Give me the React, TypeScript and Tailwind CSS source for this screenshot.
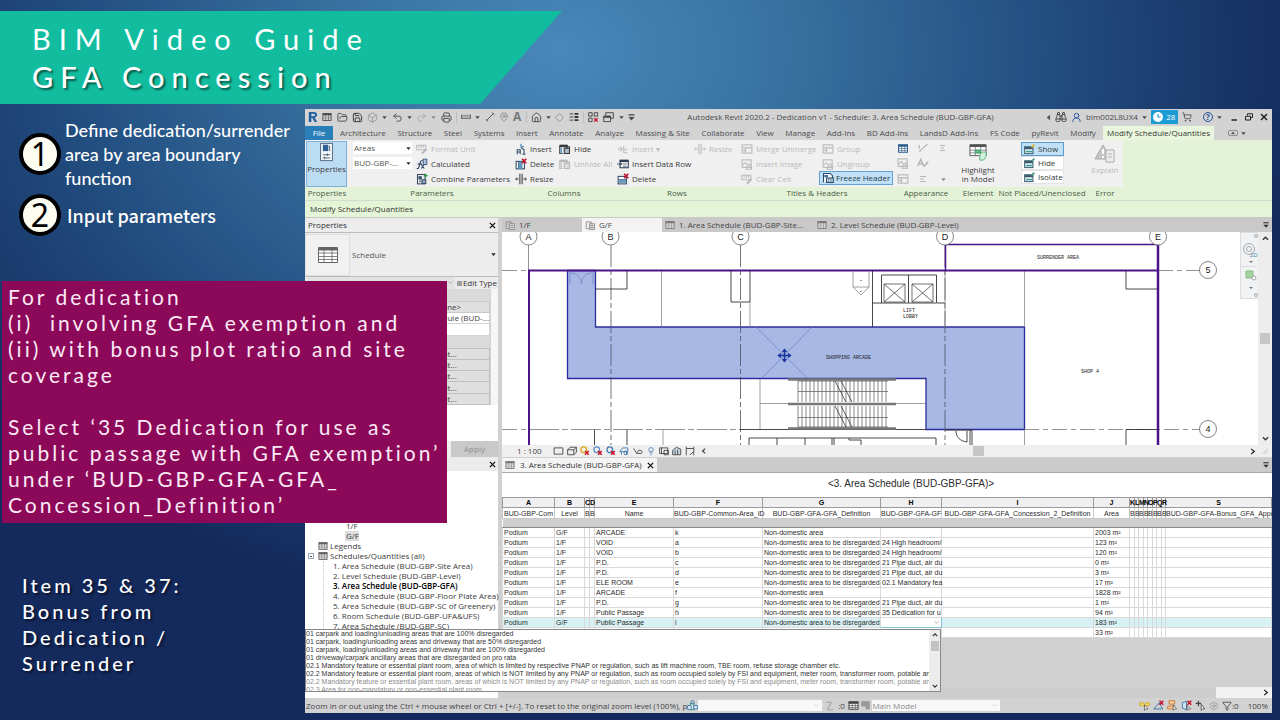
import type { ReactNode } from 'react';
import clsx from 'clsx';
import {
  Binoculars,
  Box,
  ChevronDown,
  Diamond,
  FolderOpen,
  Funnel,
  House,
  MapPin,
  Printer,
  Redo2,
  Save,
  Settings,
  ShoppingCart,
  Undo2,
  UserRound,
} from 'lucide-react';

const SANS = "font-['Open_Sans','Noto_Sans',sans-serif]";
const ROUND = "font-['Lato','Noto_Sans',sans-serif]";

const MENU_TABS = [
  'Architecture',
  'Structure',
  'Steel',
  'Systems',
  'Insert',
  'Annotate',
  'Analyze',
  'Massing & Site',
  'Collaborate',
  'View',
  'Manage',
  'Add-Ins',
  'BD Add-Ins',
  'LandsD Add-Ins',
  'FS Code',
  'pyRevit',
  'Modify',
];

const SCHEDULES = [
  '1. Area Schedule (BUD-GBP-Site Area)',
  '2. Level Schedule (BUD-GBP-Level)',
  '3. Area Schedule (BUD-GBP-GFA)',
  '4. Area Schedule (BUD-GBP-Floor Plate Area)',
  '5. Area Schedule (BUD-GBP-SC of Greenery)',
  '6. Room Schedule (BUD-GBP-UFA&UFS)',
  '7. Area Schedule (BUD-GBP-SC)',
];

const COLUMNS = [
  { letter: 'A', name: 'BUD-GBP-Com', width: 'w-[52px]' },
  { letter: 'B', name: 'Level', width: 'w-[30px]' },
  { letter: 'C', name: 'B', width: 'w-[5px]' },
  { letter: 'D', name: 'B', width: 'w-[5px]' },
  { letter: 'E', name: 'Name', width: 'w-[79px]' },
  { letter: 'F', name: 'BUD-GBP-Common-Area_ID', width: 'w-[89px]' },
  { letter: 'G', name: 'BUD-GBP-GFA-GFA_Definition', width: 'w-[118px]' },
  { letter: 'H', name: 'BUD-GBP-GFA-GF', width: 'w-[61px]' },
  { letter: 'I', name: 'BUD-GBP-GFA-GFA_Concession_2_Definition', width: 'w-[152px]' },
  { letter: 'J', name: 'Area', width: 'w-[36px]' },
  { letter: 'K', name: 'B', width: 'w-[5px]' },
  { letter: 'L', name: 'B', width: 'w-[4px]' },
  { letter: 'M', name: 'B', width: 'w-[5px]' },
  { letter: 'N', name: 'B', width: 'w-[4px]' },
  { letter: 'O', name: 'B', width: 'w-[5px]' },
  { letter: 'P', name: 'B', width: 'w-[4px]' },
  { letter: 'Q', name: 'B', width: 'w-[5px]' },
  { letter: 'R', name: 'B', width: 'w-[4px]' },
  { letter: 'S', name: 'BUD-GBP-GFA-Bonus_GFA_Appo', width: '' },
];

const DISREGARDED = 'Non-domestic area to be disregarded';

const ROWS = [
  ['Podium', 'G/F', 'ARCADE', 'k', 'Non-domestic area', '', '2003 m²'],
  ['Podium', '1/F', 'VOID', 'a', DISREGARDED, '24 High headroom/', '123 m²'],
  ['Podium', '1/F', 'VOID', 'b', DISREGARDED, '24 High headroom/', '120 m²'],
  ['Podium', '1/F', 'P.D.', 'c', DISREGARDED, '21 Pipe duct, air du', '0 m²'],
  ['Podium', '1/F', 'P.D.', 'd', DISREGARDED, '21 Pipe duct, air du', '3 m²'],
  ['Podium', '1/F', 'ELE ROOM', 'e', DISREGARDED, '02.1 Mandatory fea', '17 m²'],
  ['Podium', '1/F', 'ARCADE', 'f', 'Non-domestic area', '', '1828 m²'],
  ['Podium', '1/F', 'P.D.', 'g', DISREGARDED, '21 Pipe duct, air du', '1 m²'],
  ['Podium', '1/F', 'Public Passage', 'h', DISREGARDED, '35 Dedication for u', '94 m²'],
  ['Podium', 'G/F', 'Public Passage', 'i', DISREGARDED, '', '183 m²'],
  ['', '', '', '', '', '', '33 m²'],
];

const OPTIONS = [
  '01 carpark and loading/unloading areas that are 100% disregarded',
  '01 carpark, loading/unloading areas and driveway that are 50% disregarded',
  '01 carpark, loading/unloading areas and driveway that are 100% disregarded',
  '01 driveway/carpark ancillary areas that are disregarded on pro rata',
  '02.1 Mandatory feature or essential plant room, area of which is limited by respective PNAP or regulation, such as lift machine room, TBE room, refuse storage chamber etc.',
  '02.2 Mandatory feature or essential plant room, areas of which is NOT limited by any PNAP or regulation, such as room occupied solely by FSI and equipment, meter room, transformer room, potable and fl',
];

function Svg({ className, children }: { className?: string; children: ReactNode }) {
  return (
    <svg
      viewBox="0 0 16 16"
      fill="none"
      stroke="currentColor"
      strokeWidth="1.4"
      className={clsx('shrink-0', className || 'size-3')}
      aria-hidden="true"
    >
      {children}
    </svg>
  );
}

function Caret({ className }: { className?: string }) {
  return (
    <Svg className={clsx('size-[5px]', className)}>
      <path d="M1 4h14l-7 9z" fill="currentColor" stroke="none" />
    </Svg>
  );
}

function TableIcon({ className }: { className?: string }) {
  return (
    <Svg className={className}>
      <rect x="1.5" y="2.5" width="13" height="11" fill="#fafafa" />
      <path d="M1 4h14" strokeWidth="3" />
      <path d="M1 8h14M1 11h14M6 4v9M10.500 4v9" strokeWidth=".9" />
    </Svg>
  );
}

function PlanIcon() {
  return (
    <Svg className="size-[10px] text-[#8a8a8a]">
      <path d="M2 3h8v3M2 3v11h4" />
      <rect x="7" y="6" width="8" height="9" fill="#d8d8d8" />
      <path d="M9 9h4M9 12h4" />
    </Svg>
  );
}

function RedX() {
  return <path d="M9.500 1l5.500 6M15 1L9.500 7" stroke="#c4122f" strokeWidth="2.200" />;
}

function FormatIcon() {
  return (
    <Svg>
      <path d="M1 3h12v6H1zM4 3v3M7 3v4M10 3v3" />
      <path d="M8 14l6-6" strokeWidth="2.500" />
    </Svg>
  );
}

function CalcIcon() {
  return (
    <Svg className="size-3 text-[#1f3a5f]">
      <path d="M1 14c3 1 3-3 4-6s1-5 4-4M2 8h6M7 9l4 5M11 9l-4 5" />
      <rect x="9.500" y="1.500" width="5" height="7" fill="#a9c4dc" strokeWidth="1" />
    </Svg>
  );
}

function CombineIcon() {
  return (
    <Svg className="size-3 text-[#3b4a5c]">
      <rect x="2" y="2" width="10" height="12.500" fill="#e9eef3" />
      <path d="M4 5h3v3H4zM4 11h3" fill="#2e5f94" />
      <rect x="8" y="9" width="5" height="5" fill="#8db0cf" />
      <path d="M13 1v5M10.500 3.500h5" stroke="#2b9e4a" strokeWidth="1.800" />
    </Svg>
  );
}

function InsertIcon() {
  return (
    <Svg className="size-3 text-[#2c4965]">
      <path d="M8 1v4h4" stroke="#2f78b7" />
      <path d="M3 15V9h4v6M3 12h4M12 15V9L8 6M10 15h4" />
    </Svg>
  );
}

function InsertRowIcon() {
  return (
    <Svg>
      <path d="M1 8h6M4 5l3 3-3 3M9 13V4M9 9h5M9 13h5" />
    </Svg>
  );
}

function DeleteIcon({ rows }: { rows?: boolean }) {
  return (
    <Svg className="size-3 text-[#2b4a66]">
      <rect x="1.500" y="4.500" width="11" height="10" fill="#fff" />
      <path d={rows ? 'M2 9h10M2 12h10' : 'M5 5v9M9 5v9'} />
      <rect x={rows ? 2 : 5} y={rows ? 9 : 5} width={rows ? 10 : 4} height={rows ? 3 : 9} fill="#5f9cc5" stroke="none" />
      <RedX />
    </Svg>
  );
}

function ResizeIcon() {
  return (
    <Svg>
      <path d="M6.500 1v14M9.500 1v14" />
      <path d="M5 8H1M11 8h4M2.500 6L1 8l1.500 2M13.500 6L15 8l-1.500 2" strokeWidth="1.200" />
    </Svg>
  );
}

function HideIcon({ disabled }: { disabled?: boolean }) {
  return (
    <Svg>
      <path d="M1 3h10v4M1 3v11h4" />
      <path d="M1 4h10" strokeWidth="3" />
      <path d="M3 6v8" stroke={disabled ? '#c9c9c9' : '#5f9cc5'} strokeWidth="2" />
      <rect x="7" y="7" width="7" height="7" fill={disabled ? '#ddd' : '#a9bccb'} />
      <path d="M9 7V5h5v9" />
    </Svg>
  );
}

function GridIcon() {
  return (
    <Svg>
      <rect x="1.500" y="2.500" width="13" height="11" />
      <path d="M2 6.500h12M6 6.500V13M2 10h4" />
    </Svg>
  );
}

function PictureIcon() {
  return (
    <Svg>
      <rect x="1.500" y="2.500" width="12" height="10" />
      <path d="M2 10l4-4 3 4 2-2 3 3M7 12h7v3H7z" />
    </Svg>
  );
}

function FreezeIcon() {
  return (
    <Svg className="size-3 text-[#2a4a68]">
      <path d="M2 14V2h9l3 3v3" fill="#f7fbff" />
      <path d="M3 4h5v3H3z" fill="#3d6e9b" stroke="none" />
      <rect x="6" y="8" width="9" height="6" fill="#cfe0ee" />
      <path d="M9 8v6M12 8v6" strokeWidth=".8" />
    </Svg>
  );
}

function RowsIcon() {
  return (
    <Svg className="size-3 text-[#2a3d52]">
      <rect x="4" y="3" width="11" height="10" fill="#fff" />
      <path d="M4 4h11" strokeWidth="3" />
      <path d="M0 8h6M4 6l3 2-3 2M8 8h5M8 11h5" strokeWidth="1" />
    </Svg>
  );
}

function Cmd({ icon, label, disabled }: { icon: ReactNode; label: string; disabled?: boolean }) {
  return (
    <button
      type="button"
      disabled={disabled}
      className={clsx(
        'flex h-[15px] items-center gap-[3px] whitespace-nowrap',
        disabled ? 'text-[#b9b9b9]' : 'text-[#3a3a3a]',
      )}
    >
      {icon}
      {label}
    </button>
  );
}

function Group({ label, className, children }: { label: string; className: string; children: ReactNode }) {
  return (
    <section className={clsx('flex shrink-0 flex-col', className)}>
      <div className="flex h-[47px] bg-[#f0f0f1] pt-px">{children}</div>
      <h3 className="h-[13px] text-center leading-3 whitespace-nowrap text-[#4b5d45]">{label}</h3>
    </section>
  );
}

function Dropdown({ label, value, className }: { label: string; value: string; className?: string }) {
  return (
    <div className={clsx('relative bg-white', className)}>
      <select aria-label={label} className="block h-full w-full appearance-none pr-2 pl-px text-[#555]">
        <option>{value}</option>
      </select>
      <Caret className="pointer-events-none absolute top-1 right-px text-[#333]" />
    </div>
  );
}

function TitleBar() {
  return (
    <div className="flex h-4 items-center bg-[#d3d3d4] text-[#4a4a4a]">
      <div className="flex w-[330px] shrink-0 items-center justify-between pl-[3px]">
        <svg viewBox="0 0 12 14" className="h-3 w-[10px]" aria-hidden="true">
          <path d="M1 1h6c5 0 5 6 1 7l3 5H8L5 8H4v5H1zM4 3v3h3c2 0 2-3 0-3z" fill="#1d5f9e" fillRule="evenodd" />
        </svg>
        <TableIcon className="size-[10px]" />
        <FolderOpen size={11} />
        <Save size={11} className="text-[#333]" />
        <Box size={11} className="text-[#999]" />
        <Caret />
        <Undo2 size={11} />
        <Caret />
        <Redo2 size={11} className="text-[#aaa]" />
        <Caret className="text-[#888]" />
        <Printer size={11} />
        <span className="h-3 w-px bg-[#bdbdbd]" />
        <Svg className="size-[10px]">
          <path d="M1 4v7M15 4v7M1 10h14" />
          <path d="M1 6h14" strokeWidth="3" stroke="#999" />
        </Svg>
        <Caret />
        <Svg className="size-[10px]">
          <path d="M3 13L13 3M1 12l4 3M11 1l4 3" />
        </Svg>
        <MapPin size={10} className="text-[#888]" />
        <b className="text-xs leading-3 text-[#777]">A</b>
        <span className="h-3 w-px bg-[#bdbdbd]" />
        <House size={11} />
        <Caret />
        <Diamond size={9} className="text-[#888]" />
        <Svg className="size-[10px] text-[#333]">
          <path d="M1 3h6M1 8h6M1 13h6" />
          <path d="M9 3h6M9 8h6M9 13h6" strokeWidth="3" />
        </Svg>
        <span className="h-3 w-px bg-[#bdbdbd]" />
        <Svg className="size-[11px]">
          <path d="M1 1h5v5H1zM9 1h5v5H9zM1 9h5v5H1z" />
          <path d="M9 9l5 5M14 9l-5 5" stroke="#c4122f" strokeWidth="2" />
        </Svg>
        <Svg className="size-[11px]">
          <path d="M4 5V1h11v8h-4M1 6h10v8H1z" />
          <path d="M1 7h10" strokeWidth="3" />
        </Svg>
        <Caret />
        <Svg className="size-[7px]">
          <path d="M1 2h14" strokeWidth="3" />
          <path d="M1 7h14l-7 8z" fill="currentColor" stroke="none" />
        </Svg>
      </div>
      <h2 className="min-w-0 flex-1 truncate text-center leading-3">
        Autodesk Revit 2020.2 - Dedication v1 - Schedule: 3. Area Schedule (BUD-GBP-GFA)
      </h2>
      <div className="flex w-[226px] shrink-0 items-center gap-1 pr-1">
        <Svg className="size-[5px]">
          <path d="M12 1v14L3 8z" fill="currentColor" />
        </Svg>
        <Binoculars size={12} />
        <UserRound size={11} className="text-[#27509b]" />
        bim002L8UX4
        <Caret />
        <span className="flex h-[14px] w-[27px] items-center justify-center gap-[3px] bg-[#1c9bd4] text-white">
          <Svg className="size-[10px]">
            <circle cx="8" cy="8" r="8" fill="#fff" stroke="none" />
            <path d="M8 3v5h4" stroke="#1c9bd4" strokeWidth="1.800" />
          </Svg>
          28
        </span>
        <ShoppingCart size={10} />
        <span className="ml-[7px] flex size-[10px] items-center justify-center rounded-full border border-[#27509b] font-bold text-[#27509b]">
          ?
        </span>
        <Caret />
        <span className="flex flex-1 items-center justify-end gap-[7px] text-[#222]">
          <button type="button" aria-label="Minimize">
            <Svg className="size-2">
              <path d="M3 14h11" strokeWidth="3" />
            </Svg>
          </button>
          <button type="button" aria-label="Restore">
            <Svg className="size-2">
              <path d="M5 5V1.500h10V9h-4M1 6.500h10V14H1z" strokeWidth="2" />
            </Svg>
          </button>
          <button type="button" aria-label="Close">
            <Svg className="size-2">
              <path d="M2 2l12 12M14 2L2 14" strokeWidth="3" />
            </Svg>
          </button>
        </span>
      </div>
    </div>
  );
}

function MenuTabs() {
  return (
    <nav className="flex h-[15px] items-stretch bg-[#d3d3d4] pt-px leading-[14px] text-[#4d4d4d]">
      <button type="button" className="w-7 bg-[#2a7fb8] text-white">
        File
      </button>
      <div className="flex max-w-[770px] flex-1 justify-between px-[7px] whitespace-nowrap">
        {MENU_TABS.map((tab) => (
          <button type="button" key={tab}>
            {tab}
          </button>
        ))}
      </div>
      <button type="button" className="w-[111px] bg-[#e9f6dd] whitespace-nowrap text-[#333]">
        Modify Schedule/Quantities
      </button>
      <span className="flex items-center gap-[3px] pl-[14px]">
        <Svg className="h-[6px] w-[10px]">
          <rect x="-4" y="1" width="24" height="14" rx="4" />
          <path d="M4 10h8L8 5z" fill="currentColor" />
        </Svg>
        <Caret />
      </span>
    </nav>
  );
}

function Ribbon() {
  return (
    <div className="flex h-[61px] border-b border-[#d5dccf] bg-[#e4f3d8]">
      <Group label="Properties" className="w-[44px]">
        <button
          type="button"
          className="ml-px flex h-[46px] w-[41px] flex-col items-center border border-[#7fb2d8] bg-[#bcdcf4] text-[#3a3a3a]"
        >
          <svg viewBox="0 0 16 22" className="h-5 w-[15px]" fill="none" stroke="#4b6177" aria-hidden="true">
            <rect x="1.500" y="1.500" width="13" height="19" fill="#f5f7fa" />
            <path d="M4 3h6v7H4z" fill="#2f5e93" stroke="none" />
            <path d="M11.500 4v6M4 14h8M4 17.500h8M9 12.500v3M6 16v3" />
          </svg>
          <span className="pt-[2px]">Properties</span>
        </button>
      </Group>
      <Group label="Parameters" className="w-[166px]">
        <div className="flex w-[63px] flex-col gap-[3px] pt-px pl-1">
          <Dropdown label="Parameter type" value="Areas" className="h-3" />
          <Dropdown label="Parameter name" value="BUD-GBP-..." className="h-3" />
        </div>
        <div className="flex flex-col pl-1">
          <Cmd icon={<FormatIcon />} label="Format Unit" disabled />
          <Cmd icon={<CalcIcon />} label="Calculated" />
          <Cmd icon={<CombineIcon />} label="Combine Parameters" />
        </div>
      </Group>
      <Group label="Columns" className="w-[98px]">
        <div className="flex w-11 flex-col">
          <Cmd icon={<InsertIcon />} label="Insert" />
          <Cmd icon={<DeleteIcon />} label="Delete" />
          <Cmd icon={<ResizeIcon />} label="Resize" />
        </div>
        <div className="flex flex-col">
          <Cmd icon={<HideIcon />} label="Hide" />
          <Cmd icon={<HideIcon disabled />} label="Unhide All" disabled />
        </div>
      </Group>
      <Group label="Rows" className="w-[128px]">
        <div className="flex w-[81px] flex-col pl-1">
          <Cmd icon={<InsertRowIcon />} label="Insert ▾" disabled />
          <Cmd icon={<RowsIcon />} label="Insert Data Row" />
          <Cmd icon={<DeleteIcon rows />} label="Delete" />
        </div>
        <Cmd icon={<ResizeIcon />} label="Resize" disabled />
      </Group>
      <Group label="Titles & Headers" className="w-[152px]">
        <div className="flex w-[78px] flex-col">
          <Cmd icon={<GridIcon />} label="Merge Unmerge" disabled />
          <Cmd icon={<PictureIcon />} label="Insert Image" disabled />
          <Cmd icon={<FormatIcon />} label="Clear Cell" disabled />
        </div>
        <div className="flex flex-col">
          <div className="flex flex-col pl-[3px]">
            <Cmd icon={<GridIcon />} label="Group" disabled />
            <Cmd icon={<PictureIcon />} label="Ungroup" disabled />
          </div>
          <button
            type="button"
            className="flex h-[14px] w-[74px] items-center gap-[2px] border border-[#5fa3d3] bg-[#bfe0f6] pl-[2px] whitespace-nowrap text-[#2e3c48]"
          >
            <FreezeIcon />
            Freeze Header
          </button>
        </div>
      </Group>
      <Group label="Appearance" className="w-[66px]">
        <div className="grid grid-cols-3 items-center justify-items-center text-[#b5b5b5]">
          <TableIcon className="h-[11px] w-5 text-[#2f5e8a]" />
          <Svg className="h-[10px] w-4">
            <path d="M2 14l5-5L15 2M2 3v6" strokeWidth="2" />
          </Svg>
          <Svg className="h-2 w-4">
            <path d="M2 3h10M4 8h6M2 13h10" strokeWidth="2" />
          </Svg>
          <PictureIcon />
          <Svg className="h-3 w-4">
            <path d="M1 12L5 3l4 9M3 9h4M9 13l6-7" strokeWidth="2" />
          </Svg>
          <span />
          <GridIcon />
          <Svg className="h-2 w-4">
            <path d="M2 3h12M2 8h8M2 13h12" strokeWidth="2" />
          </Svg>
          <Caret className="text-[#888]" />
        </div>
      </Group>
      <Group label="Element" className="w-[38px]">
        <button type="button" className="flex w-full flex-col items-center leading-[9px] text-[#3a3a3a]">
          <svg viewBox="0 0 20 20" className="mt-[2px] mb-1 h-[18px] w-5" fill="none" stroke="#555" aria-hidden="true">
            <path d="M1 2h18v12H1z" fill="#fff" />
            <path d="M1 3h18" strokeWidth="3" />
            <path d="M1 8h18M1 11h18M7 3v11M13 3v11" strokeWidth=".7" />
            <path d="M7 8h6v3H7z" fill="#65c08a" stroke="#2fa060" />
            <path d="M12 13l3-3h4v5l-3 4h-4z" fill="#d6f0de" stroke="#4fae78" />
          </svg>
          Highlight
          <br />
          in Model
        </button>
      </Group>
      <Group label="Not Placed/Unenclosed" className="w-[90px]">
        <div className="flex flex-col pt-px pl-[24px]">
          {['Show', 'Hide', 'Isolate'].map((item) => (
            <button
              type="button"
              key={item}
              className={clsx(
                'flex h-[14px] w-[43px] items-center gap-[3px] border px-[2px] text-[#3a3a3a]',
                item === 'Show' ? 'border-[#5b9bcd] bg-[#bfe0f6]' : 'border-[#e4e4e4] bg-white',
              )}
            >
              <Svg className="size-[11px] text-[#35566b]">
                <rect x="1" y="4" width="12" height="10" fill="#dcebef" />
                <path d="M1 6h12" strokeWidth="3" />
                <path d="M3 11h9" stroke="#3f9a9a" strokeWidth="2" />
                <path d="M11 5l4-4" stroke={item === 'Show' ? '#e0b520' : '#4f9a7a'} strokeWidth="2.500" />
              </Svg>
              {item}
            </button>
          ))}
        </div>
      </Group>
      <Group label="Error" className="w-[36px]">
        <button type="button" disabled className="flex w-full flex-col items-center text-[#b9b9b9]">
          <svg viewBox="0 0 22 20" className="mt-[2px] mb-[2px] h-5 w-[22px]" fill="none" stroke="#aaa" aria-hidden="true">
            <path d="M9 2l8 14H1z" fill="#c6c6c6" />
            <path d="M9 6v5M9 13v2" stroke="#fff" strokeWidth="2" />
            <path d="M12 7h8v12h-8z" fill="#eee" />
            <path d="M14 11h4M14 14h4" />
          </svg>
          Explain
        </button>
      </Group>
    </div>
  );
}

function PanelHeader({ title }: { title: string }) {
  return (
    <div className="flex h-[14px] items-center justify-between bg-[#ececed] pr-[2px] pl-[3px] text-[#333]">
      {title}
      <button type="button" aria-label="Close panel" className="ml-auto">
        <Svg className="size-[7px] text-[#111]">
          <path d="M2 2l12 12M14 2L2 14" strokeWidth="3" />
        </Svg>
      </button>
    </div>
  );
}

function PropertiesPanel() {
  return (
    <div className="flex h-[239px] flex-col">
      <PanelHeader title="Properties" />
      <div className="flex h-[45px] items-center border-y border-[#bcbcbc] bg-[#ededee] pr-[2px] text-[#555]">
        <div className="flex h-[42px] w-[45px] items-center justify-center border border-[#dedede] bg-[#f1f1f2]">
          <svg viewBox="0 0 20 16" className="h-4 w-5" fill="#fff" stroke="#666" aria-hidden="true">
            <path d="M.5.5h19v15H.5z" />
            <path d="M1 2h18" strokeWidth="3" />
            <path d="M1 6h18M1 9.500h18M1 12.500h18M6 3v12M14 3v12" strokeWidth=".8" />
          </svg>
        </div>
        <span className="flex-1 pl-[2px] leading-3">Schedule</span>
        <Caret className="text-[#222]" />
      </div>
      <div className="flex h-[12px] items-center justify-between bg-[#ececec] pl-[2px] text-[#333]">
        <div className="relative w-[148px] bg-[#e2e2e2]">
          <select aria-label="Schedule instance" className="block h-3 w-full appearance-none pr-3">
            <option>Schedule: 3. Area Schedule (BUD-GBP...</option>
          </select>
          <ChevronDown size={7} className="pointer-events-none absolute top-[2px] right-px text-[#888]" />
        </div>
        <button type="button" className="flex items-center gap-px pr-px whitespace-nowrap">
          <Svg className="size-[5px]">
            <path d="M1 1h6v6H1zM9 1h6v6H9zM1 9h6v6H1zM9 9h6v6H9z" />
          </Svg>
          Edit Type
        </button>
      </div>
      <div className="flex flex-1 bg-white text-[#444]">
        <table className="h-[116px] flex-1 border-collapse text-center leading-[10px]">
          <tbody>
            <tr className="h-3 bg-[#dadadb]">
              <td colSpan={2} />
            </tr>
            <tr className="h-[11px]">
              <td />
              <td className="w-[86px] border border-[#c8c8c8] bg-[#dfdfdf]">{'<None>'}</td>
            </tr>
            <tr className="h-[11px]">
              <td />
              <td className="border border-[#d4d4d4] text-right whitespace-nowrap">Area Schedule (BUD-...</td>
            </tr>
            <tr className="h-3">
              <td />
              <td className="border border-[#d4d4d4]" />
            </tr>
            <tr className="h-3 bg-[#dadadb]">
              <td colSpan={2} />
            </tr>
            {[1, 2, 3, 4, 5].map((row) => (
              <tr key={row} className="h-[11px]">
                <td />
                <td className="border border-[#bfbfbf] bg-[#dfdfdf]">Edit...</td>
              </tr>
            ))}
          </tbody>
        </table>
        <div className="h-[116px] w-2 border-l border-[#d4d4d4] bg-[#f6f6f6]" />
      </div>
      <div className="flex h-[16px] justify-end bg-[#f0f0f0]">
        <button type="button" disabled className="w-[47px] bg-[#c9c9c9] text-[#8f8f8f]">
          Apply
        </button>
      </div>
    </div>
  );
}

function ProjectBrowser() {
  return (
    <div className="flex flex-1 flex-col bg-white">
      <PanelHeader title="" />
      <ul className="pt-[50px] leading-[10px] text-[#3a3a3a]">
        <li className="ml-[41px]">1/F</li>
        <li className="ml-[40px] w-[14px] bg-[#dcdcdc] pl-px">G/F</li>
        <li className="flex items-center gap-[2px] pl-[13px]">
          <TableIcon className="size-[10px] text-[#666]" />
          Legends
        </li>
        <li>
          <div className="flex items-center gap-[2px] pl-[3px]">
            <span className="mr-[2px] flex size-[6px] items-center justify-center border border-[#9aa6b5]">
              <span className="h-px w-[2px] bg-[#555]" />
            </span>
            <TableIcon className="size-[10px] text-[#666]" />
            Schedules/Quantities (all)
          </div>
          <ul className="ml-[18px] border-l border-dotted border-[#c5c5c5] pl-[9px] whitespace-nowrap">
            {SCHEDULES.map((name, i) => (
              <li key={name} className={i === 2 ? 'font-semibold text-black' : undefined}>
                {name}
              </li>
            ))}
          </ul>
        </li>
      </ul>
    </div>
  );
}

function Bubble({ x, y, label }: { x: number; y: number; label: string }) {
  return (
    <g>
      <circle cx={x} cy={y} r="8.500" fill="#fff" stroke="#666" strokeWidth=".8" />
      <text x={x} y={y + 3} fontSize="9" textAnchor="middle" fill="#222">
        {label}
      </text>
    </g>
  );
}

function FloorPlan() {
  const treads = Array.from({ length: 23 }, (_, i) => 798 + i * 4);

  return (
    <svg
      viewBox="502 232 756 213"
      preserveAspectRatio="xMinYMin slice"
      className="block h-[213px] min-w-0 flex-1 bg-white font-['Liberation_Sans',sans-serif]"
      fill="none"
      role="img"
      aria-label="G/F plan"
    >
      <path
        d="M567.500 270.500H595.500V327H1024.500V429.500H926V378.500H567.500z"
        fill="#a7b8e5"
        stroke="#2c2c9c"
        strokeWidth="1.300"
      />
      <g stroke="#7080c0" strokeWidth=".7">
        <path d="M756 327l51 51M812 327l-50 51" />
        <path d="M570 272v12M593 272v12M571 273c6 0 10 4 10.500 11M592 273c-6 0-10 4-10.500 11" />
      </g>
      <g stroke="#777" strokeWidth=".8">
        <path d="M528.500 245v25" />
        <path d="M611 245v200M740.500 245v200M945 245v200" strokeDasharray="22 3 5 3" stroke="#4d5160" />
        <path d="M502 270.500h26M502 429.500h27M1158 270.500h42M1024 429.500h176" strokeDasharray="15 4 5 4" />
        <path d="M529 429.500h211" strokeDasharray="30 3 6 3" />
      </g>
      <g stroke="#333" strokeWidth=".9">
        <path d="M595.500 289h31.500V271M731 271v31h19v-31M872.500 271v32h9v-28h55v28h8.500M881 303h55M908.500 275v28M872.500 303v24" />
        <path d="M884 284h21v18h-21zM912 284h21v18h-21zM884 284l21 18M905 284l-21 18M912 284l21 18M933 284l-21 18" strokeWidth=".7" />
        <path d="M1126 271v18h31M1126 445v-15.500h31M594.500 445v-15.500M627 445v-15.500M740 429.500h186" />
        <path d="M749 445v-7h187v7M777 438v7M805 438v7M832 438v7M834 438v7M849 438v2h12v5" />
        <path d="M945 430h27v15M967 431v11c-7-1-11-5-11-11M970 430v15" />
      </g>
      <g stroke="#888" strokeWidth=".8">
        <path d="M661.500 271v56M750 302v25M1024.500 271v56M1024.500 430v15M663 430v15M760 379v50M945 271v56" />
        <path d="M853 272v15h16v-15M853 287l8 8 8-8" />
        <path d="M760 403.500h28M896 403.500h30" />
      </g>
      <path d="M788 379.500h108M788 404h108M788 428.500h108" stroke="#777" strokeWidth="2.500" />
      <g stroke="#555" strokeWidth=".7">
        {treads.map((x) => (
          <path key={x} d={`M${x} 381v21M${x} 406v21`} />
        ))}
        <path d="M798 391.500h90M798 417.500h90M798 381h90M798 427h90" />
        <path d="M835 381l11 21M841 381l11 21M835 406l11 21M841 406l11 21" stroke="#222" />
      </g>
      <path d="M861 280v1M861 291v1" stroke="#333" />
      <g stroke="#4a1488">
        <path d="M529 445V270.500H1158" strokeWidth="2" />
        <path d="M1158 244v201" strokeWidth="2.500" />
        <path d="M945.500 270V244.500H1158" strokeWidth="1.500" />
      </g>
      <Bubble x={528.5} y={236.5} label="A" />
      <Bubble x={610.5} y={236.5} label="B" />
      <Bubble x={740.5} y={236.5} label="C" />
      <Bubble x={945} y={236.5} label="D" />
      <Bubble x={1158} y={236.5} label="E" />
      <Bubble x={1208} y={270} label="5" />
      <Bubble x={1208} y={429} label="4" />
      <g className="font-['Liberation_Mono',monospace]" fontSize="5" fill="#222">
        <text x="1037" y="259">SURRENDER AREA</text>
        <text x="826" y="359">SHOPPING ARCADE</text>
        <text x="1081" y="373">SHOP 4</text>
        <text x="903" y="312">LIFT</text>
        <text x="903" y="318">LOBBY</text>
      </g>
      <path
        d="M784.500 350v11M779 355.500h11M782.500 352l2-2.500 2 2.500M782.500 359l2 2.500 2-2.500M781 353.500l-2.500 2 2.500 2M788 353.500l2.500 2-2.500 2"
        stroke="#17339c"
        strokeWidth="1.400"
      />
      <rect x="1240.500" y="232.500" width="18" height="66" fill="#f1f2f3" stroke="#ddd" />
      <g stroke="#a3a9ae">
        <circle cx="1249" cy="249" r="5.500" />
        <circle cx="1249" cy="249" r="2.500" />
        <path d="M1241 266.500h16" stroke="#ddd" />
        <path d="M1246 271h7v7h-7z" fill="#a5d3a0" stroke="#8cbb88" />
        <circle cx="1254" cy="278" r="2" fill="#fff" />
        <circle cx="1256" cy="236" r="1.500" />
        <circle cx="1256" cy="295" r="1.500" />
      </g>
      <text x="1250" y="257" fontSize="6" fill="#4a8fae">
        2D
      </text>
      <path d="M1249 261h4l-2 2zM1249 287h4l-2 2z" fill="#777" />
    </svg>
  );
}

function ViewControls() {
  return (
    <div className="flex h-3 items-center bg-[#efefef] pr-1 pl-[15px] text-[#444]">
      <span className="w-9 shrink-0 whitespace-nowrap">1 : 100</span>
      <div className="flex w-[142px] shrink-0 items-center justify-between">
        <Svg className="h-[10px] w-[11px]">
          <path d="M1 3h14v10H1z" />
        </Svg>
        <Svg className="size-[10px]">
          <path d="M1 6h10v8H1zM1 6l4-4h10l-4 4M15 2v8l-4 4" />
        </Svg>
        {['#e0a817', '#5b8fc0', '#3f78ad'].map((color) => (
          <Svg key={color} className="size-[10px]">
            <circle cx="6" cy="6" r="4.500" stroke={color} strokeWidth="2" />
            <path d="M8 8l6 6M14 8l-6 6" stroke="#c4122f" strokeWidth="2.500" />
          </Svg>
        ))}
        <Svg className="size-[10px] text-[#3f78ad]">
          <path d="M1 9l5-6h8v6H1zM4 9v5M12 9v5" />
          <circle cx="11" cy="11" r="3" />
        </Svg>
        <Svg className="size-[10px]">
          <path d="M1 4l5 8 3-5h4a3 3 0 010 5H7" />
        </Svg>
        <Svg className="size-[10px] text-[#4a88bb]">
          <circle cx="8" cy="6" r="3.500" />
          <path d="M6 11h4M7 14h2" />
        </Svg>
        <Svg className="size-[10px]">
          <path d="M1 3h13v9H1zM4 3v9M8 7h7v7H8z" />
        </Svg>
        <Svg className="size-[10px]">
          <path d="M1 7l6-5 7 3v9H1z" fill="#c8d6e2" />
          <path d="M5 7v7M9 6v8" />
        </Svg>
        <Svg className="size-[10px]">
          <path d="M2 1v14M14 1v14M2 4h12M8 14l6-5" />
        </Svg>
      </div>
      <Svg className="ml-[6px] size-[6px]">
        <path d="M11 2L4 8l7 6" strokeWidth="3" />
      </Svg>
      <div className="flex flex-1 justify-center">
        <span className="h-[10px] w-[11px] bg-[#c6c6c6]" />
      </div>
      <Svg className="mr-[6px] size-[7px] text-[#222]">
        <path d="M5 2l7 6-7 6" strokeWidth="3" />
      </Svg>
      <Svg className="size-[6px] text-[#bbb]">
        <path d="M2 15L15 2M8 15l7-7" strokeWidth="2" />
      </Svg>
    </div>
  );
}

function DocTab({ label, active, plan, className }: { label: string; active?: boolean; plan?: boolean; className: string }) {
  return (
    <button
      type="button"
      className={clsx(
        'flex h-full items-center gap-1 pl-[3px] whitespace-nowrap text-[#444]',
        active ? 'bg-[#f3f3f3]' : 'bg-[#c9c9ca]',
        className,
      )}
    >
      {plan ? <PlanIcon /> : <TableIcon className="size-[10px] text-[#777]" />}
      {label}
    </button>
  );
}

function TabMenu() {
  return (
    <Svg className="mr-[3px] ml-auto size-[6px] text-[#333]">
      <path d="M1 2h14" strokeWidth="3" />
      <path d="M1 7h14l-7 8z" fill="currentColor" stroke="none" />
    </Svg>
  );
}

function ScheduleTable() {
  const cell = 'border border-[#d9d9d9] py-0 pr-0 pl-px whitespace-nowrap';

  return (
    <table className="w-full table-fixed border-collapse bg-white text-[7px] leading-[9px] text-[#2b2b2b]">
      <caption className="h-[25px] border-t border-[#aaa] bg-white pl-12 text-[10px] leading-[22px]">
        {'<3. Area Schedule (BUD-GBP-GFA)>'}
      </caption>
      <thead>
        <tr className="h-[10px] bg-[#f0f0f2]">
          {COLUMNS.map((c) => (
            <th key={c.letter} className={clsx('border border-[#9a9a9a] p-0 text-black', c.width)}>
              {c.letter}
            </th>
          ))}
        </tr>
        <tr className="h-[11px]">
          {COLUMNS.map((c) => (
            <th key={c.letter} className="border border-[#c9c9c9] p-0 font-normal whitespace-nowrap">
              {c.name}
            </th>
          ))}
        </tr>
        <tr className="h-[9px] bg-[#cfcfcf]">
          <td colSpan={19} className="border-b border-[#8a8a8a] p-0" />
        </tr>
      </thead>
      <tbody>
        {ROWS.map(([podium, level, name, id, definition, concession, area], i) => (
          <tr key={i} className={clsx('h-[10px]', i === 9 && 'bg-[#d8f1f4]')}>
            <td className={cell}>{podium}</td>
            <td className={cell}>{level}</td>
            <td className={cell} />
            <td className={cell} />
            <td className={cell}>{name}</td>
            <td className={cell}>{id}</td>
            <td className={cell}>{definition}</td>
            {i === 9 ? (
              <td className="border border-[#7fc3d8] bg-white p-0">
                <div className="relative">
                  <select aria-label="GFA concession definition" className="block h-[9px] w-full appearance-none" />
                  <ChevronDown size={7} className="pointer-events-none absolute top-px right-px text-[#777]" />
                </div>
              </td>
            ) : (
              <td className={cell}>{concession}</td>
            )}
            <td className={cell} />
            <td className={cell}>{area}</td>
            {COLUMNS.slice(10).map((c) => (
              <td key={c.letter} className={cell} />
            ))}
          </tr>
        ))}
      </tbody>
    </table>
  );
}

function ConcessionList() {
  return (
    <div className="absolute bottom-[21px] left-0 flex w-[636px] border border-[#888] bg-white font-['Liberation_Sans',sans-serif] text-[7px] text-[#333]">
      <ul role="listbox" aria-label="GFA concession options" className="h-[61px] min-w-0 flex-1 overflow-hidden leading-[8px]">
        {OPTIONS.map((option) => (
          <li key={option} role="option" aria-selected="false" className="whitespace-nowrap">
            {option}
          </li>
        ))}
        <li role="option" aria-selected="false" className="whitespace-nowrap text-[#8a8a8a]">
          {OPTIONS[5]}
        </li>
        <li role="option" aria-selected="false" className="text-[#8a8a8a]">
          02.3 Area for non-mandatory or non-essential plant room
        </li>
      </ul>
      <div className="flex w-[11px] flex-col items-center justify-between bg-[#ececec] py-[2px] text-[#333]">
        <div className="flex flex-col items-center gap-[3px]">
          <Svg className="size-[6px]">
            <path d="M2 11l6-6 6 6" strokeWidth="3" />
          </Svg>
          <span className="h-[10px] w-2 bg-[#c2c2c2]" />
        </div>
        <Svg className="size-[6px]">
          <path d="M2 5l6 6 6-6" strokeWidth="3" />
        </Svg>
      </div>
    </div>
  );
}

function StatusBar() {
  return (
    <footer className="flex h-[15px] items-center bg-[#d2d2d3] pl-px text-[#444]">
      <p className="shrink-0 whitespace-nowrap">
        Zoom in or out using the Ctrl + mouse wheel or Ctrl + [+/-]. To reset to the original zoom level (100%), p
      </p>
      <Svg className="size-[11px]">
        <path d="M5 5h5v9H5z" stroke="#3f8f6d" fill="#dff0e6" />
        <circle cx="8" cy="3.500" r="2.500" stroke="#3f78ad" />
        <path d="M1 8h5v6H1zM10 8h5v5h-5z" stroke="#3f78ad" fill="#e8f2fb" />
      </Svg>
      <div className="relative h-[11px] w-[124px] bg-[#f8f8f8]">
        <select aria-label="Active workset" className="block h-full w-full appearance-none" />
        <ChevronDown size={7} className="pointer-events-none absolute top-[2px] right-[2px] text-[#c5c5c5]" />
      </div>
      <span className="flex w-[48px] items-center justify-between pl-[3px]">
        <Svg className="size-[10px] text-[#aaa]">
          <path d="M2 2h6M11 1L3 14M5 14h8" strokeWidth="2" />
        </Svg>
        :0
        <TableIcon className="size-[11px]" />
        <Svg className="size-[9px] text-[#999]">
          <path d="M1 1h14v13H9V9H1z" fill="currentColor" />
        </Svg>
      </span>
      <div className="relative ml-[2px] h-[11px] w-[128px] bg-[#f8f8f8] text-[#888]">
        <select aria-label="Design option" className="block h-full w-full appearance-none">
          <option>Main Model</option>
        </select>
        <ChevronDown size={7} className="pointer-events-none absolute top-[2px] right-[2px] text-[#c5c5c5]" />
      </div>
      <div className="ml-auto flex items-center gap-[3px] pr-1">
        <Svg className="size-[11px]">
          <path d="M1 4h5l2 3 2-3h5v4h-4l-3 2-3-2H1z" stroke="#d3a91c" fill="#f3dd85" />
          <path d="M8 7v8l2-2h3z" fill="#fff" strokeWidth="1" />
        </Svg>
        <Svg className="size-[11px]">
          <path d="M1 13h13L9 4z" stroke="#3f78ad" />
          <RedX />
        </Svg>
        <Svg className="size-[11px]">
          <path d="M3 1h8v5H3zM1 9h10v4H1z" stroke="#d07b2b" fill="#f6d0ac" />
          <path d="M9 7v8l2-2h3z" fill="#fff" strokeWidth="1" />
        </Svg>
        <Svg className="size-[11px]">
          <path d="M2 4l6-2v12l-6-2z" stroke="#3f78ad" fill="#cfe3f3" />
          <path d="M9 8v7l2-2h3z" fill="#fff" strokeWidth="1" />
          <RedX />
        </Svg>
        <Svg className="size-[11px]">
          <path d="M5 1v8M1 5h8" strokeWidth="1.800" />
          <path d="M9 6v9l2-2h3z" fill="#fff" strokeWidth="1.200" />
        </Svg>
        <Settings size={10} className="text-[#9a9a9a]" />
        <span className="flex items-center">
          <Funnel size={10} />
          :0
        </span>
        <span className="pl-[6px]">100%</span>
      </div>
    </footer>
  );
}

function RevitWindow() {
  return (
    <div className={clsx('relative flex min-w-0 flex-1 flex-col bg-[#d0d0d0] text-[8px] leading-[10px]', SANS)}>
      <TitleBar />
      <MenuTabs />
      <Ribbon />
      <div className="flex h-[17px] items-center border-b border-[#c9c9c9] bg-[#e4f4d6] pl-[5px] text-[#333]">
        Modify Schedule/Quantities
      </div>
      <div className="flex flex-1">
        <div className="mr-1 flex w-[193px] shrink-0 flex-col">
          <PropertiesPanel />
          <ProjectBrowser />
        </div>
        <div className="flex min-w-0 flex-1 flex-col">
          <div className="flex h-[14px] items-center bg-[#c9c9ca]">
            <DocTab label="1/F" plan className="w-[80px]" />
            <DocTab label="G/F" plan active className="w-[80px]" />
            <DocTab label="1. Area Schedule (BUD-GBP-Site..." className="w-[152px]" />
            <DocTab label="2. Level Schedule (BUD-GBP-Level)" className="w-[160px]" />
            <TabMenu />
          </div>
          <div className="flex">
            <FloorPlan />
            <div className="flex w-[14px] flex-col items-center justify-between bg-[#ededed] py-[3px] text-[#333]">
              <Svg className="size-[7px]">
                <path d="M2 11l6-6 6 6" strokeWidth="3" />
              </Svg>
              <span className="h-[11px] w-[10px] bg-[#c6c6c6]" />
              <Svg className="size-[7px]">
                <path d="M2 5l6 6 6-6" strokeWidth="3" />
              </Svg>
            </div>
          </div>
          <ViewControls />
          <div className="mt-px flex h-[14px] items-center bg-[#cbcbcb]">
            <button type="button" className="flex h-full items-center gap-[5px] bg-[#f4f4f4] px-[3px] whitespace-nowrap text-[#333]">
              <TableIcon className="size-[10px] text-[#777]" />
              3. Area Schedule (BUD-GBP-GFA)
              <Svg className="size-[7px] text-[#111]">
                <path d="M2 2l12 12M14 2L2 14" strokeWidth="3" />
              </Svg>
            </button>
            <TabMenu />
          </div>
          <div className="flex-1 overflow-hidden bg-[#d0d0d0] font-['Liberation_Sans',sans-serif]">
            <ScheduleTable />
          </div>
          <div className="flex h-[11px] items-center bg-[#cdcdcd]">
            <span className="ml-auto flex h-full w-[56px] items-center justify-end bg-[#f2f2f2] pr-[3px]">
              <Svg className="size-[7px] text-[#222]">
                <path d="M5 2l7 6-7 6" strokeWidth="3" />
              </Svg>
            </span>
          </div>
        </div>
      </div>
      <ConcessionList />
      <StatusBar />
    </div>
  );
}

function Step({ number, children }: { number: number; children: ReactNode }) {
  return (
    <li className="flex items-center gap-1">
      <span className="flex size-[42px] shrink-0 items-center justify-center rounded-full border-4 border-black bg-[#fdfdf2] font-['Noto_Sans',sans-serif] text-[32px] leading-8 text-black">
        {number}
      </span>
      {children}
    </li>
  );
}

export default function App() {
  return (
    <div className="flex min-h-screen flex-col overflow-hidden bg-[#14295c] bg-[radial-gradient(ellipse_760px_560px_at_560px_50px,#4888ba_0%,#38719f_30%,#235082_62%,#14295c_100%)] pt-[11px]">
      <header
        className={clsx(
          'flex h-[93px] w-[562px] flex-col justify-center bg-[#12bd9f] pl-8 text-white [clip-path:polygon(0_0,100%_0,calc(100%_-_82px)_100%,0_100%)]',
          ROUND,
        )}
      >
        <p className="text-[29px] leading-[38px] tracking-[8px] whitespace-nowrap">BIM Video Guide</p>
        <h1 className="text-[29px] leading-[38px] font-medium tracking-[7px] whitespace-nowrap [text-shadow:2px_2px_2px_#0008]">
          GFA Concession
        </h1>
      </header>
      <main className="flex flex-1 pt-[5px] pr-2 pb-[7px]">
        <aside className={clsx('flex w-[305px] shrink-0 flex-col text-white', ROUND)}>
          <ol className="flex flex-col gap-1 pt-[9px] pl-[19px]">
            <Step number={1}>
              <span className="text-lg leading-6 font-medium whitespace-nowrap">
                Define dedication/surrender
                <br />
                area by area boundary
                <br />
                function
              </span>
            </Step>
            <Step number={2}>
              <span className="pl-[2px] font-['Noto_Sans_CJK_SC',sans-serif] text-lg leading-6 font-medium">Input parameters</span>
            </Step>
          </ol>
          <section className="relative z-10 mt-[45px] ml-[2px] w-[445px] bg-[#8c0858] px-[6px] pt-[3px] pb-[5px] text-[21px] leading-[26px] tracking-[3px] whitespace-pre text-[#fbe9f6]">
            <p>For dedication</p>
            <p>(i)  involving GFA exemption and</p>
            <p>(ii) with bonus plot ratio and site</p>
            <p>coverage</p>
            <p className="pt-[26px]">Select ‘35 Dedication for use as</p>
            <p>public passage with GFA exemption’</p>
            <p>under ‘BUD-GBP-GFA-GFA_</p>
            <p>Concession_Definition’</p>
          </section>
          <p className="pt-[49px] pl-[22px] text-xl leading-[26px] font-medium tracking-[3px] [text-shadow:2px_2px_2px_#0008]">
            Item 35 & 37:
            <br />
            Bonus from
            <br />
            Dedication /
            <br />
            Surrender
          </p>
        </aside>
        <RevitWindow />
      </main>
    </div>
  );
}
